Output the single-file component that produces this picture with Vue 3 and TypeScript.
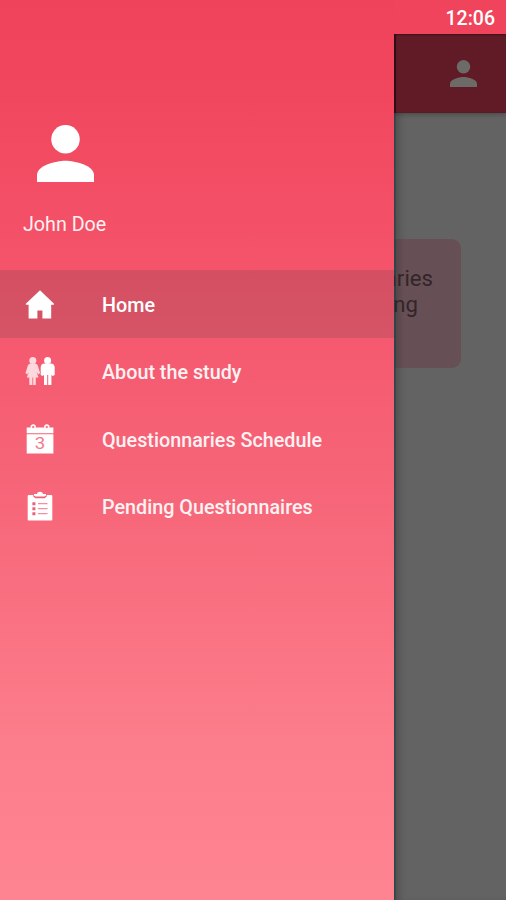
<script setup lang="ts">
type IconName = 'home' | 'people' | 'calendar' | 'clipboard'

interface MenuItem {
  label: string
  icon: IconName
  active?: boolean
}

const items: MenuItem[] = [
  { label: 'Home', icon: 'home', active: true },
  { label: 'About the study', icon: 'people' },
  { label: 'Questionnaries Schedule', icon: 'calendar' },
  { label: 'Pending Questionnaires', icon: 'clipboard' },
]
</script>

<template>
  <div class="screen">
    <aside class="drawer">
      <header class="profile">
        <svg class="avatar" viewBox="4 4 16 16">
          <circle cx="12" cy="8" r="4" />
          <path d="M12 14c-2.67 0-8 1.34-8 4v2h16v-2c0-2.66-5.33-4-8-4z" />
        </svg>
        <span class="name">John Doe</span>
      </header>
      <nav class="menu">
        <a v-for="item in items" :key="item.label" class="item" :class="{ active: item.active }">
          <svg class="icon" viewBox="0 0 32 32">
            <path
              v-if="item.icon === 'home'"
              d="M16 1.3 1.800 14.700v1h2.800v13.800h8.800v-8h5v8h8.800V15.700h2.800v-1z"
            />
            <template v-else-if="item.icon === 'people'">
              <g opacity=".76">
                <circle cx="8.800" cy="4.400" r="3.500" />
                <path d="M6 7.500h5.600l2 1.500 2.500 8-1.900 1.600-1.700-2.600 2 5.600h-2.700v7.500H9.200v-7.500h-.8v7.500H5.300v-7.500H2.700l2.300-5.600-1.700 2.600-1.800-1.600 2.500-8z" />
              </g>
              <circle cx="23.600" cy="4.400" r="3.500" />
              <path d="M20.500 7.500h6.200c2.700 0 4 1.600 4 4.200V19l-2 1-1.300-1v10.100h-3.200V19h-1v10.100H20V19l-1.300 1-2-1v-7.300c0-2.600 1.200-4.200 3.800-4.200z" />
            </template>
            <template v-else-if="item.icon === 'calendar'">
              <path d="M2.700 3.400h26.700v5.800H2.700zM2.700 10.300h26.700v19.300H2.700z" />
              <circle class="ring" cx="9.200" cy="3" r="2" />
              <circle class="ring" cx="22.800" cy="3" r="2" />
              <text class="day" x="16" y="25.200" text-anchor="middle" textLength="10.500" lengthAdjust="spacingAndGlyphs">3</text>
            </template>
            <template v-else>
              <path d="M4.700 4h22.600a1 1 0 0 1 1 1v23.500a1 1 0 0 1-1 1H4.700a1 1 0 0 1-1-1V5a1 1 0 0 1 1-1z" />
              <path class="cut" d="M9.300 3.600h13.400v2l-2 1.600h-9.400l-2-1.600z" />
              <path d="M10 3.100h2.900a3.200 3.200 0 0 1 6.200 0H22v1.500l-1.500.8h-9L10 4.600z" />
              <path class="cut" d="M8.400 11.200h3v3h-3zM8.400 16.200h3v3h-3zM8.400 21.200h3v3h-3z" />
              <path class="cut thin" d="M14 12h9.500v1.200H14zM14 17h9.500v1.200H14zM14 22h9.500v1.200H14z" />
            </template>
          </svg>
          <span class="label">{{ item.label }}</span>
        </a>
      </nav>
    </aside>
    <section class="side">
      <div class="status">12:06</div>
      <main class="page">
        <div class="toolbar">
          <svg class="account" viewBox="4 4 16 16">
            <circle cx="12" cy="8" r="4" />
            <path d="M12 14c-2.67 0-8 1.34-8 4v2h16v-2c0-2.660-5.330-4-8-4z" />
          </svg>
        </div>
        <div class="card">
          <span class="line">aries</span>
          <span class="line second">ng</span>
        </div>
      </main>
    </section>
  </div>
</template>

<style>
body {
  margin: 0;
}
</style>

<style scoped>
.screen {
  display: flex;
  width: 506px;
  height: 900px;
  overflow: hidden;
  font-family: Roboto, "Liberation Sans", sans-serif;
  color: #fff;
}
.drawer {
  flex: none;
  width: 394px;
  background: linear-gradient(#ef435b 0, #f0455c 70px, #f4536a 260px, #f66478 480px, #fc7d8b 740px, #fe8491 900px);
}
.profile {
  display: flex;
  flex-direction: column;
  box-sizing: border-box;
  height: 270px;
  padding-top: 125px;
}
.avatar {
  width: 57px;
  height: 57px;
  margin-left: 37px;
  fill: #fff;
}
.name {
  margin: 31px 0 0 23px;
  font-size: 19.700px;
  line-height: 24px;
  color: #fff0f1;
}
.item {
  display: flex;
  align-items: center;
  box-sizing: border-box;
  height: 67.500px;
  padding: 2px 0 0 24px;
}
.active {
  background: rgba(60, 60, 60, 0.17);
}
.icon {
  width: 32px;
  height: 32px;
  fill: #fff;
}
.cut {
  fill: #ee6077;
}
.thin {
  opacity: 0.7;
}
.ring {
  fill: #f58b9a;
  stroke: #fff;
  stroke-width: 1.400px;
}
.day {
  fill: #f27a8c;
  font-size: 17px;
}
.label {
  margin-left: 46px;
  padding-top: 1px;
  font-size: 19.750px;
  font-weight: 500;
  color: #fff2f2;
}
.active .label {
  color: #fff;
}
.side {
  display: flex;
  flex-direction: column;
  flex: 1;
  min-width: 0;
}
.status {
  height: 34px;
  box-sizing: border-box;
  padding-right: 11px;
  background: #f0445c;
  font-size: 19.500px;
  font-weight: 500;
  line-height: 37px;
  text-align: right;
}
.page {
  flex: 1;
  overflow: hidden;
  background: #636363;
  box-shadow: inset 1.500px 0 0 #2b4548, inset 9px 0 8px -5px rgba(0, 0, 0, 0.25);
}
.toolbar {
  display: flex;
  align-items: center;
  justify-content: flex-end;
  height: 79px;
  box-sizing: border-box;
  padding-right: 29px;
  background: #601b26;
  box-shadow: 0 2px 4px rgba(0, 0, 0, 0.22), inset 2px 0 1px #2d0e15, inset 0 2px 2px -1px #42131c;
}
.account {
  width: 27px;
  height: 27px;
  fill: #6d6b68;
}
.card {
  display: flex;
  flex-direction: column;
  align-items: flex-end;
  box-sizing: border-box;
  width: 67px;
  height: 129px;
  margin-top: 126px;
  padding: 26px 28px 0 0;
  border-radius: 0 9px 9px 0;
  background: linear-gradient(90deg, #2b4548 1.500px, #574549 2px, #665055 10px);
  overflow: hidden;
}
.line {
  color: #332529;
  font-size: 22.200px;
  line-height: 26px;
}
.second {
  margin-right: 15px;
}
</style>
